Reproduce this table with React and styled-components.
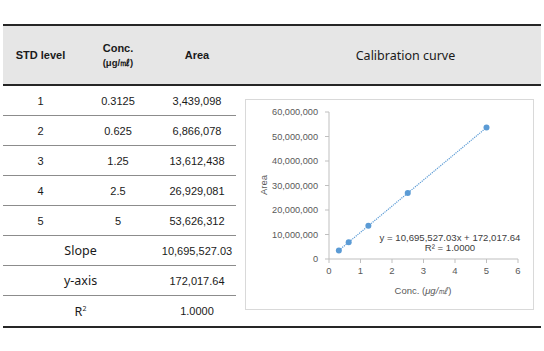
import React from 'react'
import styled, { createGlobalStyle } from 'styled-components'

const rows = [
  { level: '1', conc: '0.3125', area: '3,439,098' },
  { level: '2', conc: '0.625', area: '6,866,078' },
  { level: '3', conc: '1.25', area: '13,612,438' },
  { level: '4', conc: '2.5', area: '26,929,081' },
  { level: '5', conc: '5', area: '53,626,312' }
]

const points = [
  [0.3125, 3439098],
  [0.625, 6866078],
  [1.25, 13612438],
  [2.5, 26929081],
  [5, 53626312]
]

const slope = 10695527.03
const intercept = 172017.64

// plot frame inside the chart box
const X0 = 84
const XU = 31.5
const Y0 = 160
const YU = 24.5 / 10000000

const px = (x) => X0 + x * XU
const py = (y) => Y0 - y * YU

const yTicks = [0, 1, 2, 3, 4, 5, 6]
const xTicks = [0, 1, 2, 3, 4, 5, 6]

const Chart = () => (
  <svg width='289' height='211' viewBox='0 0 289 211'>
    <line x1={X0} y1={py(60000000)} x2={X0} y2={Y0} stroke='#bfbfbf' strokeWidth='1' />
    <line x1={X0} y1={Y0} x2={px(6)} y2={Y0} stroke='#bfbfbf' strokeWidth='1' />
    {yTicks.map((t) => (
      <g key={'y' + t}>
        <line x1={X0 - 4} y1={py(t * 10000000)} x2={X0} y2={py(t * 10000000)} stroke='#bfbfbf' />
        <text x={73} y={py(t * 10000000) + 3} textAnchor='end' fontSize='9.2' fill='#595959' fontFamily='Liberation Sans, Arial, sans-serif'>
          {t === 0 ? '0' : t + '0,000,000'}
        </text>
      </g>
    ))}
    {xTicks.map((t) => (
      <g key={'x' + t}>
        <line x1={px(t)} y1={Y0} x2={px(t)} y2={Y0 + 4} stroke='#bfbfbf' />
        <text x={px(t)} y={Y0 + 15} textAnchor='middle' fontSize='9.5' fill='#595959' fontFamily='Liberation Sans, Arial, sans-serif'>
          {t}
        </text>
      </g>
    ))}
    <text x='0' y='0' transform='translate(22 86) rotate(-90)' textAnchor='middle' fontSize='9.5' fill='#595959' fontFamily='Liberation Sans, Arial, sans-serif'>
      Area
    </text>
    <text x='178' y='195' textAnchor='middle' fontSize='9.5' fill='#595959' fontFamily='Liberation Sans, Arial, sans-serif'>
      Conc. (<tspan fontStyle='italic'>μg/㎖</tspan>)
    </text>
    <line
      x1={px(0.3125)}
      y1={py(slope * 0.3125 + intercept)}
      x2={px(5)}
      y2={py(slope * 5 + intercept)}
      stroke='#5b9bd5'
      strokeWidth='1.2'
      strokeDasharray='1.2 1'
    />
    {points.map(([x, y]) => (
      <circle key={x} cx={px(x)} cy={py(y)} r='3' fill='#5b9bd5' />
    ))}
    <text x='205' y='142' textAnchor='middle' fontSize='9.6' fill='#404040' fontFamily='Liberation Sans, Arial, sans-serif'>
      y = 10,695,527.03x + 172,017.64
    </text>
    <text x='205' y='152' textAnchor='middle' fontSize='9.6' fill='#404040' fontFamily='Liberation Sans, Arial, sans-serif'>
      R² = 1.0000
    </text>
  </svg>
)

const App = () => (
  <>
    <GlobalStyle />
    <Frame>
      <Header>
        <HeadCell>STD level</HeadCell>
        <HeadCell>
          Conc.
          <Unit>(μg/㎖)</Unit>
        </HeadCell>
        <HeadCell>Area</HeadCell>
        <TitleCell>Calibration curve</TitleCell>
      </Header>
      <Body>
        <Rows>
          {rows.map((r) => (
            <Row key={r.level}>
              <Cell>{r.level}</Cell>
              <Cell>{r.conc}</Cell>
              <Cell>{r.area}</Cell>
            </Row>
          ))}
          <Row>
            <Label>Slope</Label>
            <Cell>10,695,527.03</Cell>
          </Row>
          <Row>
            <Label>y-axis</Label>
            <Cell>172,017.64</Cell>
          </Row>
          <Row last>
            <Label>
              R<sup>2</sup>
            </Label>
            <Cell>1.0000</Cell>
          </Row>
        </Rows>
        <ChartArea>
          <ChartBox>
            <Chart />
          </ChartBox>
        </ChartArea>
      </Body>
    </Frame>
  </>
)

export default App

const GlobalStyle = createGlobalStyle`
  body {
    margin: 0;
    background: #fff;
    font-family: 'Liberation Sans', Arial, sans-serif;
    color: #1a1a1a;
  }
`

const Frame = styled.div`
  margin: 24px 3px 0 3px;
  width: 538px;
  border-top: 2px solid #262626;
  border-bottom: 2px solid #262626;
`

const Header = styled.div`
  display: grid;
  grid-template-columns: 75px 80px 78px 1fr;
  height: 58px;
  background: #e6e6e6;
  border-bottom: 2px solid #262626;
  align-items: center;
`

const HeadCell = styled.div`
  display: flex;
  flex-direction: column;
  align-items: center;
  font-size: 11px;
  font-weight: bold;
  line-height: 15px;
  text-align: center;
`

const Unit = styled.span`
  font-size: 9.5px;
  line-height: 14px;
`

const TitleCell = styled.div`
  text-align: center;
  font-family: 'Noto Sans', sans-serif;
  font-size: 12.5px;
  padding-left: 34px;
`

const Body = styled.div`
  display: grid;
  grid-template-columns: 233px 1fr;
`

const Rows = styled.div`
  display: flex;
  flex-direction: column;
`

const Row = styled.div`
  display: grid;
  grid-template-columns: ${(p) => (p.children.length === 2 ? '155px 78px' : '75px 80px 78px')};
  height: ${(p) => (p.last ? '30px' : '29px')};
  align-items: center;
  border-bottom: ${(p) => (p.last ? 'none' : '1px solid #8c8c8c')};
`

const Cell = styled.div`
  text-align: center;
  font-size: 11px;
`

const Label = styled.div`
  text-align: center;
  font-family: 'Noto Sans', sans-serif;
  font-size: 12.5px;
  sup {
    font-size: 7px;
    vertical-align: 5px;
    line-height: 0;
  }
`

const ChartArea = styled.div`
  display: flex;
  align-items: flex-start;
  justify-content: flex-start;
  padding: 13px 0 0 9px;
`

const ChartBox = styled.div`
  width: 289px;
  height: 211px;
  border: 1px solid #d9d9d9;
  box-sizing: border-box;
  svg {
    display: block;
    margin: -1px;
  }
`
